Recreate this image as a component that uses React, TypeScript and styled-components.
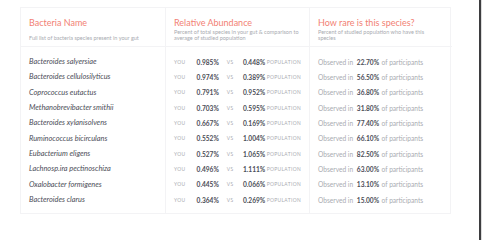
import styled, { createGlobalStyle } from 'styled-components';

const GlobalStyle = createGlobalStyle`
    html, body {
        margin: 0;
        padding: 0;
        background: #ffffff;
        font-family: Lato, 'Open Sans', sans-serif;
    }
`;

const ACCENT = '#f27f74';
const TEXT_DARK = '#4b4d57';
const TEXT_LIGHT = '#a9abb1';
const LINE = '#f3f3f5';

const Page = styled.div`
    display: flex;
    width: 482px;
    height: 240px;
    overflow: hidden;
`;

const Main = styled.div`
    flex: 1;
    padding: 7px 0 0 20px;
`;

const EdgeBar = styled.div`
    width: 2px;
    background: #3d3d3f;
    border-right: 1px solid #dcdcdc;
`;

const Card = styled.div`
    display: grid;
    grid-template-columns: 144px 144px 143px;
    width: 431px;
    border: 1px solid ${LINE};
    box-sizing: border-box;
`;

const Column = styled.div<{ $divider?: boolean }>`
    display: flex;
    flex-direction: column;
    border-left: ${({ $divider }) => ($divider ? `1px solid ${LINE}` : 'none')};
`;

const Header = styled.div`
    display: flex;
    flex-direction: column;
    height: 39px;
    padding: 9px 8px 0 8px;
    box-sizing: border-box;
    border-bottom: 1px solid ${LINE};
`;

const Title = styled.div`
    color: ${ACCENT};
    font-size: 9px;
    line-height: 11px;
`;

const Subtitle = styled.div<{ $lowered?: boolean; $maxWidth?: number }>`
    color: ${TEXT_LIGHT};
    font-size: 5.5px;
    line-height: 6px;
    max-width: ${({ $maxWidth }) => ($maxWidth ? `${$maxWidth}px` : 'none')};
    margin-top: ${({ $lowered }) => ($lowered ? '6.5px' : '0.5px')};
`;

const Body = styled.div`
    display: flex;
    flex-direction: column;
    padding: 7px 8px 6px 8px;
`;

const Row = styled.div`
    display: flex;
    align-items: center;
    height: 15.33px;
    white-space: nowrap;
`;

const SpeciesName = styled.span`
    color: ${TEXT_DARK};
    font-style: italic;
    font-size: 7.4px;
`;

const Tiny = styled.span<{ $pad?: number }>`
    color: ${TEXT_LIGHT};
    font-size: 4.9px;
    letter-spacing: 0.35px;
    padding-left: ${({ $pad }) => $pad ?? 0}px;
`;

const Value = styled.span<{ $width: number }>`
    display: inline-block;
    flex-shrink: 0;
    width: ${({ $width }) => $width}px;
    text-align: right;
    color: ${TEXT_DARK};
    font-size: 6.6px;
    font-weight: 700;
`;

const Muted = styled.span<{ $pad?: number }>`
    color: ${TEXT_LIGHT};
    font-size: 6.6px;
    padding-left: ${({ $pad }) => $pad ?? 0}px;
`;

const YouLabel = styled(Tiny)`
    display: inline-block;
    width: 18px;
`;

const VsLabel = styled(Tiny)`
    display: inline-block;
    width: 10px;
    padding-left: 8px;
`;

const rows = [
    { name: 'Bacteroides salyersiae', you: '0.985%', pop: '0.448%', rare: '22.70%' },
    { name: 'Bacteroides cellulosilyticus', you: '0.974%', pop: '0.389%', rare: '56.50%' },
    { name: 'Coprococcus eutactus', you: '0.791%', pop: '0.952%', rare: '36.80%' },
    { name: 'Methanobrevibacter smithii', you: '0.703%', pop: '0.595%', rare: '31.80%' },
    { name: 'Bacteroides xylanisolvens', you: '0.667%', pop: '0.169%', rare: '77.40%' },
    { name: 'Ruminococcus bicirculans', you: '0.552%', pop: '1.004%', rare: '66.10%' },
    { name: 'Eubacterium eligens', you: '0.527%', pop: '1.065%', rare: '82.50%' },
    { name: 'Lachnosp.ira pectinoschiza', you: '0.496%', pop: '1.111%', rare: '63.00%' },
    { name: 'Oxalobacter formigenes', you: '0.445%', pop: '0.066%', rare: '13.10%' },
    { name: 'Bacteroides clarus', you: '0.364%', pop: '0.269%', rare: '15.00%' },
];

const App = () => (
    <>
        <GlobalStyle />
        <Page>
            <Main>
                <Card>
                    <Column>
                        <Header>
                            <Title>Bacteria Name</Title>
                            <Subtitle $lowered>Full list of bacteria species present in your gut</Subtitle>
                        </Header>
                        <Body>
                            {rows.map(row => (
                                <Row key={row.name}>
                                    <SpeciesName>{row.name}</SpeciesName>
                                </Row>
                            ))}
                        </Body>
                    </Column>

                    <Column $divider>
                        <Header>
                            <Title>Relative Abundance</Title>
                            <Subtitle>
                                Percent of total species in your gut &amp; comparison to average of studied
                                population
                            </Subtitle>
                        </Header>
                        <Body>
                            {rows.map(row => (
                                <Row key={row.name}>
                                    <YouLabel>YOU</YouLabel>
                                    <Value $width={28}>{row.you}</Value>
                                    <VsLabel>VS</VsLabel>
                                    <Value $width={29}>{row.pop}</Value>
                                    <Tiny $pad={1.5}>POPULATION</Tiny>
                                </Row>
                            ))}
                        </Body>
                    </Column>

                    <Column $divider>
                        <Header>
                            <Title>How rare is this species?</Title>
                            <Subtitle $maxWidth={112}>
                                Percent of studied population who have this species
                            </Subtitle>
                        </Header>
                        <Body>
                            {rows.map(row => (
                                <Row key={row.name}>
                                    <Muted>Observed in</Muted>
                                    <Value $width={26}>{row.rare}</Value>
                                    <Muted $pad={2.5}>of participants</Muted>
                                </Row>
                            ))}
                        </Body>
                    </Column>
                </Card>
            </Main>
            <EdgeBar />
        </Page>
    </>
);

export default App;
